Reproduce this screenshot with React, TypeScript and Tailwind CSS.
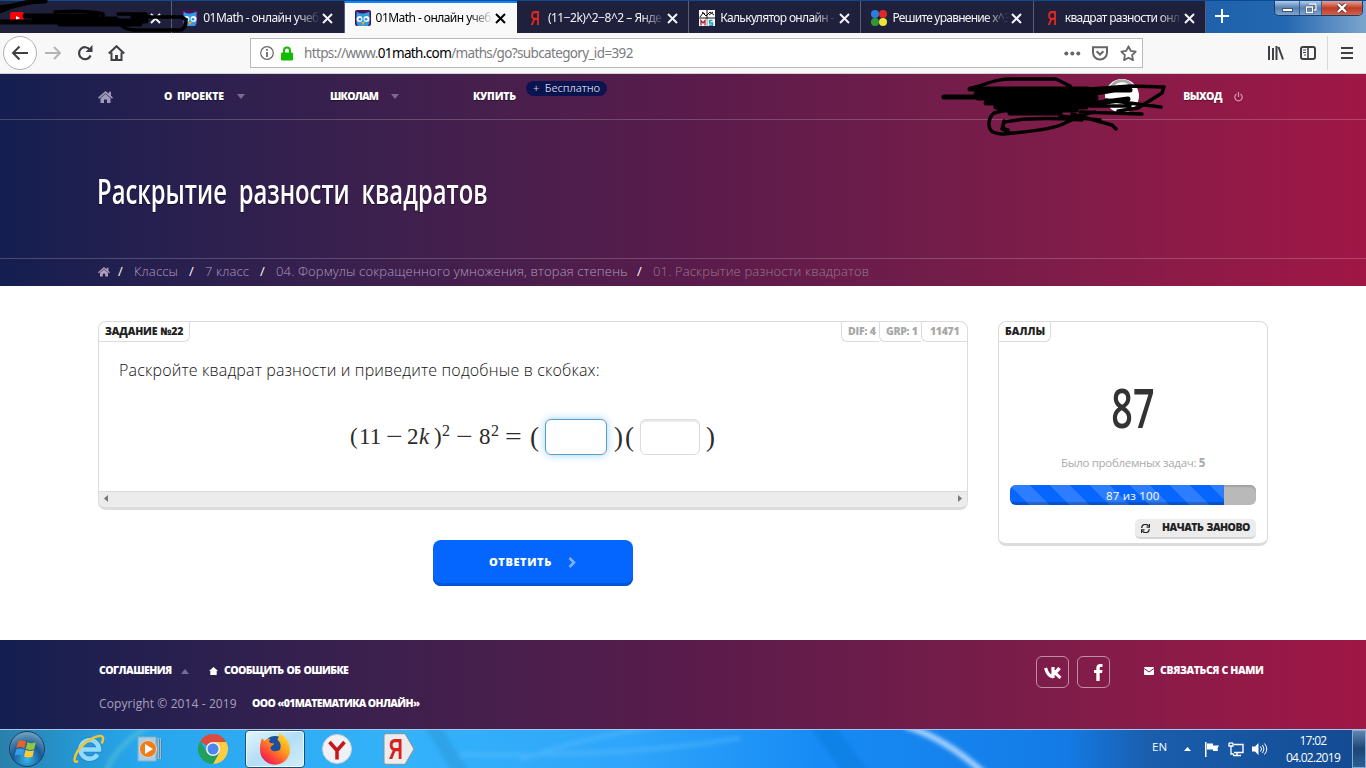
import { ReactNode } from 'react'
import clsx from 'clsx'

/* ---------- browser chrome ---------- */

function OwlIcon() {
  return (
    <svg width="16" height="16" viewBox="0 0 16 16">
      <rect width="16" height="16" rx="2" fill="#4a0f58" />
      <path d="M1.500 1.500Q4 4 8 3.500T14.500 1.500V13L13 16H3l-1.500-3z" fill="#2f9be0" />
      <circle cx="4.500" cy="9" r="3" fill="#eaf7ff" />
      <circle cx="11.500" cy="9" r="3" fill="#eaf7ff" />
      <circle cx="5" cy="9.200" r="1.300" fill="#3a8ac4" />
      <circle cx="11" cy="9.200" r="1.300" fill="#3a8ac4" />
      <path d="M6.200 12h3.600L8 15.600z" fill="#f5a623" />
    </svg>
  )
}

function YandexIcon() {
  return (
    <span className="w-4 text-center text-[20px] leading-4 text-[#e0281f] font-['Liberation_Sans',sans-serif]">
      <span className="inline-block scale-x-[0.65] font-bold">Я</span>
    </span>
  )
}

function CalcIcon() {
  return (
    <svg width="16" height="16" viewBox="0 0 16 16">
      <rect width="16" height="16" fill="#fff" />
      <path d="M8 0v9M0 8h16M1 7l3-4 3 3 4-4 4 3M3 2l3 2M10 5l4-3" stroke="#111" strokeWidth="1" fill="none" />
      <path d="M2 15.5V10.5l2 2.5 2-2.500V15.500" stroke="#b3202c" strokeWidth="1.3" fill="none" />
      <path d="M13.500 10.500H10.500V13h3v2.300H10" stroke="#16a3b8" strokeWidth="1.500" fill="none" />
      <path d="M8 9v7" stroke="#999" />
    </svg>
  )
}

function DotsIcon() {
  return (
    <svg width="16" height="16" viewBox="0 0 16 16">
      <circle cx="4" cy="4" r="4" fill="#2f7de0" />
      <circle cx="12" cy="4" r="4" fill="#e02626" />
      <circle cx="4" cy="12" r="4" fill="#2f9a33" />
      <circle cx="12" cy="12" r="4" fill="#ece43a" />
    </svg>
  )
}

function YoutubeIcon() {
  return (
    <svg width="16" height="16" viewBox="0 0 16 16">
      <rect x="0" y="2" width="14" height="11" rx="2.500" fill="#f00" />
      <path d="M6 6l4 2-4 2z" fill="#fff" />
    </svg>
  )
}

function CloseIcon() {
  return (
    <svg width="11" height="11" viewBox="0 0 11 11" className="shrink-0">
      <path d="M1 1l9 9M10 1l-9 9" stroke="currentColor" strokeWidth="2" />
    </svg>
  )
}

interface TabProps {
  icon: ReactNode
  title: string
  active?: boolean
  tracking?: string
}

function Tab({ icon, title, active, tracking = 'tracking-[-0.55px]' }: TabProps) {
  return (
    <div
      className={clsx(
        'flex h-full w-[172.3px] shrink-0 items-center pl-[10px]',
        active ? 'border-t-2 border-[#0a84ff] bg-[#f9f9fa] text-black' : 'border-r border-[#5b5d78] bg-[#1f203c] pt-[2px] text-[#f3f3f7]',
      )}
    >
      <span className="flex w-[21px] shrink-0">{icon}</span>
      <span
        className={clsx(
          'w-[117px] whitespace-nowrap text-xs [mask-image:linear-gradient(to_right,#000_80%,transparent)]',
          tracking,
        )}
      >
        {title}
      </span>
      <span className="ml-[2px] flex">
        <CloseIcon />
      </span>
    </div>
  )
}

function TabStrip() {
  return (
    <div className="flex h-[33px] border-t border-[#0d4a94] bg-linear-to-r from-[#1c63b0] via-[#2f72b8] to-[#6e9cc8]">
      <Tab icon={<YoutubeIcon />} title="" />
      <Tab icon={<OwlIcon />} title="01Math - онлайн учебн" />
      <Tab icon={<OwlIcon />} title="01Math - онлайн учебн" active />
      <Tab icon={<YandexIcon />} title="(11−2k)^2−8^2 – Янде" tracking="tracking-[-0.5px]" />
      <Tab icon={<CalcIcon />} title="Калькулятор онлайн -" tracking="tracking-[-0.65px]" />
      <Tab icon={<DotsIcon />} title="Решите уравнение x^3" tracking="tracking-[-0.75px]" />
      <Tab icon={<YandexIcon />} title="квадрат разности онл" tracking="tracking-[-0.65px]" />
      <div className="flex flex-1 justify-between bg-linear-to-r from-[#1f61ab] via-[#2468b2] to-[#7ba5cd]">
        <svg width="16" height="16" viewBox="0 0 16 16" className="ml-[8px] mt-[7px]">
          <path d="M8 1v14M1 8h14" stroke="#fff" strokeWidth="2" />
        </svg>
        <div className="mr-[3px] flex h-[15px] overflow-hidden rounded-b-[5px] border border-t-0 border-[#1c3c66]">
          <div className="flex w-[25px] items-center justify-center border-r border-[#355d8c] bg-linear-to-b from-[#b4cce6] via-[#5580b4] to-[#7fa6d2]">
            <span className="mt-[3px] h-[4px] w-[11px] border border-[#46566c] bg-white" />
          </div>
          <div className="flex w-[22px] items-center justify-center border-r border-[#355d8c] bg-linear-to-b from-[#b4cce6] via-[#5580b4] to-[#7fa6d2]">
            <svg width="12" height="11" viewBox="0 0 12 11">
              <path d="M4 1h7v6H9M1.500 4h6v5.500h-6z" fill="none" stroke="#46566c" strokeWidth="2.600" />
              <path d="M4 1h7v6H9M1.500 4h6v5.500h-6z" fill="none" stroke="#fff" strokeWidth="1.300" />
            </svg>
          </div>
          <div className="flex w-[40px] items-center justify-center bg-linear-to-b from-[#e0a294] via-[#bf3a24] to-[#d0614a]">
            <svg width="12" height="10" viewBox="0 0 12 10">
              <path d="M2 1l8 8M10 1L2 9" stroke="#5b3a3a" strokeWidth="4" />
              <path d="M2 1l8 8M10 1L2 9" stroke="#fff" strokeWidth="2.400" />
            </svg>
          </div>
        </div>
      </div>
    </div>
  )
}

function Toolbar() {
  return (
    <div className="flex h-[41px] items-center border-b border-[#d2d2d4] bg-[#f8f8f9] text-[#3f3f44]">
      <div className="ml-[3px] flex size-[34px] items-center justify-center rounded-full border border-[#b1b1b5] bg-white">
        <svg width="18" height="16" viewBox="0 0 18 16" fill="none" stroke="currentColor" strokeWidth="2">
          <path d="M17 8H2M8.500 1.500L2 8l6.500 6.500" />
        </svg>
      </div>
      <svg width="17" height="14" viewBox="0 0 17 14" fill="none" stroke="#b5b5b8" strokeWidth="2" className="ml-2">
        <path d="M0 7h15M9 1l6 6-6 6" />
      </svg>
      <svg width="16" height="16" viewBox="0 0 16 16" fill="none" stroke="currentColor" strokeWidth="2.200" className="ml-[15px]">
        <path d="M13 4.800A6 6 0 1 0 13.600 10.500" />
        <path d="M15.500 0v7h-7z" fill="currentColor" stroke="none" />
      </svg>
      <svg width="17" height="16" viewBox="0 0 17 16" fill="none" stroke="currentColor" strokeWidth="2" className="ml-[15px]">
        <path d="M.8 8.500L8.500 1.200l7.700 7.300M3.500 7.500V15h10V7.500" />
        <path d="M7 15v-5h3v5z" fill="currentColor" stroke="none" />
      </svg>
      <div className="ml-[125px] flex h-[30px] w-[893px] items-center border border-[#b9b9bb] bg-white">
        <svg width="14" height="14" viewBox="0 0 14 14" fill="none" stroke="#66666a" className="ml-[9px]">
          <circle cx="7" cy="7" r="6.300" strokeWidth="1.200" />
          <path d="M7 6v5M7 3v1.700" strokeWidth="1.700" />
        </svg>
        <svg width="12" height="15" viewBox="0 0 12 15" className="ml-[7px]">
          <path d="M3 7V4.500a3 3 0 0 1 6 0V7" fill="none" stroke="#12bc00" strokeWidth="2" />
          <rect y="6.500" width="12" height="8" rx="1.200" fill="#12bc00" />
        </svg>
        <span className="ml-[11px] whitespace-nowrap text-[13.5px] tracking-[-0.64px] text-[#7b7b80]">
          https://www.<span className="text-black">01math.com</span>/maths/go?subcategory_id=392
        </span>
        <svg width="17" height="5" viewBox="0 0 17 5" fill="#66666a" className="ml-auto">
          <circle cx="2.300" cy="2.500" r="2" />
          <circle cx="8.300" cy="2.500" r="2" />
          <circle cx="14.300" cy="2.500" r="2" />
        </svg>
        <svg width="16" height="15" viewBox="0 0 16 15" fill="none" stroke="#66666a" strokeWidth="2" className="ml-[11px]">
          <path d="M1 1.200h14V6.500a7 7 0 0 1-14 0z" />
          <path d="M4.600 5.200L8 8.500l3.400-3.300" />
        </svg>
        <svg width="17" height="17" viewBox="0 0 17 17" fill="none" stroke="#66666a" strokeWidth="1.800" strokeLinejoin="round" className="ml-3 mr-[5px]">
          <path d="M8.500 1.300l2.200 4.600 5 .7-3.600 3.500.9 5-4.500-2.400L4 15.100l.9-5L1.300 6.600l5-.7z" />
        </svg>
      </div>
      <svg width="16" height="14" viewBox="0 0 16 14" stroke="currentColor" strokeWidth="2" className="ml-auto">
        <path d="M1 0v14M5 2v12M8.500 0v14M10.500 1l4.500 12.500" />
      </svg>
      <svg width="16" height="14" viewBox="0 0 16 14" fill="none" stroke="currentColor" className="ml-[16px]">
        <rect x="1" y="1" width="14" height="12" rx="2" strokeWidth="2" />
        <path d="M8 1v12" strokeWidth="1.600" />
        <path d="M3 4h3M3 6.500h3M4 9h2" strokeWidth="1" />
      </svg>
      <div className="ml-[11px] h-[34px] border-l border-[#d7d7db]" />
      <svg width="12" height="12" viewBox="0 0 12 12" stroke="currentColor" strokeWidth="2" className="ml-[13px] mr-[13px]">
        <path d="M0 1h12M0 6h12M0 11h12" />
      </svg>
    </div>
  )
}

/* ---------- site ---------- */

function HomeIcon({ size = 15 }: { size?: number }) {
  return (
    <svg width={size} height={size * 0.8} viewBox="0 0 15 12" fill="currentColor">
      <path d="M7.500 0L10.800 2.800V.8h2.200v3.900l2 1.900-1 1.200-6.500-5.600L1 7.800 0 6.600z" />
      <path d="M7.500 2.800l5 4.400V12H9V8.500H6V12H2.500V7.200z" />
    </svg>
  )
}

function Caret({ up }: { up?: boolean }) {
  return (
    <svg width="8" height="5" viewBox="0 0 8 5" fill="#7b6a94" className={clsx('shrink-0', up && 'rotate-180')}>
      <path d="M0 0h8L4 5z" />
    </svg>
  )
}

function Scribble() {
  return (
    <svg
      width="230"
      height="66"
      viewBox="0 0 230 66"
      fill="none"
      stroke="#000"
      strokeLinecap="round"
      strokeLinejoin="round"
      className="absolute left-[940px] top-0"
    >
      <circle cx="182" cy="22" r="17" fill="#fff" stroke="none" />
      <path d="M172 12a12 12 0 0 1 20 0" stroke="#aaa" strokeWidth="3" />
      <path
        d="M4 23h34M30 15h118M36 20h120M38 24h118M46 29h112M56 33h90M60 36h76M70 39h50M120 16h70M150 20l24-4M150 30l38-5"
        strokeWidth="5"
      />
      <path d="M32 14c18-5 24-9 40-9h44l14 7M150 15l40-3 34 1-2 6-24 15-20 3M166 26l55 7M150 32l40 0" strokeWidth="3.500" />
      <path d="M66 36l-12 3c-6 5-7 15-1 19 6 3 12 2 20 1 22-2 40-4 50-9 10-5 22-11 32-12M64 48l-2 7 8 4M64 48c20-4 50-4 78-2M64 47c-2 6-1 8 4 9M120 42l40 4M132 40l40 11 4 4M140 38l62 2" strokeWidth="3.500" />
    </svg>
  )
}

const gradient = 'bg-linear-to-r from-[#141e50] via-[#591b4b] to-[#a01645]'

function SiteHeader() {
  return (
    <header className={clsx('relative h-[212px] text-white', gradient)}>
      <nav className="flex h-[46px] items-center border-b border-white/20 pl-[98px] text-[10.5px] font-extrabold tracking-[-0.1px] [text-shadow:0_1px_1px_#0006]">
        <span className="w-[66px] text-[#a09ab8]">
          <HomeIcon />
        </span>
        <span className="flex w-[166px] items-center gap-[13px] whitespace-nowrap">
          <span className="w-[60px] [word-spacing:2px]">О ПРОЕКТЕ</span>
          <Caret />
        </span>
        <span className="flex w-[143px] items-center gap-[13px]">
          <span className="w-[48px] tracking-[-0.8px]">ШКОЛАМ</span>
          <Caret />
        </span>
        <span className="w-[53px] tracking-[-0.2px]">КУПИТЬ</span>
        <span className="mb-4 flex h-[15px] w-[81px] items-center justify-center rounded-full bg-[#0c1450] text-[11px] font-normal text-[#c6cbe6] [word-spacing:3px]">
          + Бесплатно
        </span>
        <span className="ml-auto mr-[12px] tracking-[-0.5px]">ВЫХОД</span>
        <svg width="9" height="10" viewBox="0 0 9 10" fill="none" stroke="#d293b0" strokeWidth="1.200" className="mr-[123px]">
          <path d="M4.500 0v5M2.500 2a3.700 3.700 0 1 0 4 0" />
        </svg>
      </nav>
      <Scribble />
      <div className="flex h-[138px] items-center pl-[97px]">
        <h1 className="origin-left scale-x-[0.7] whitespace-nowrap pt-[4px] text-[34px] font-semibold leading-none [word-spacing:8px] [text-shadow:0_1px_1px_#0008]">
          Раскрытие разности квадратов
        </h1>
      </div>
      <div className="flex h-7 items-center whitespace-nowrap border-t border-white/20 pb-px pl-[98px] text-[13px] font-light tracking-[0.16px] text-[#b09cbc]">
        <HomeIcon size={12} />
        <Slash />
        <span className="w-[47px]">Классы</span>
        <Slash />
        <span className="w-[47px]">7 класс</span>
        <Slash />
        <span className="w-[353px]">04. Формулы сокращенного умножения, вторая степень</span>
        <Slash />
        <span className="text-[#9a7a8c]">01. Раскрытие разности квадратов</span>
      </div>
    </header>
  )
}

function Slash() {
  return <span className="w-[24px] pl-[8px] font-normal text-white">/</span>
}

function AnswerBox({ focused }: { focused?: boolean }) {
  return (
    <span
      className={clsx(
        'h-9 shrink-0 rounded-md border bg-white',
        focused ? 'w-[62px] border-[#5b9dc9] shadow-[0_0_8px_#9fd2fb]' : 'w-[60px] border-[#dcdcdc] shadow-[inset_0_2px_0_#ebebeb]',
      )}
    />
  )
}

function Paren({ children }: { children: string }) {
  return <span className="text-[27px] leading-[34px]">{children}</span>
}

function Operator({ children }: { children: string }) {
  return <span className="inline-block origin-left scale-x-[1.3]">{children}</span>
}

function Formula() {
  return (
    <div className="ml-[251px] mt-[37px] flex h-9 items-center whitespace-nowrap text-[23px] text-[#2b2b2b] font-['Liberation_Serif',serif]">
      <span className="w-[9px]">(</span>
      <span className="w-[27px]">11</span>
      <span className="w-[21px]">
        <Operator>−</Operator>
      </span>
      <span className="w-[12px]">2</span>
      <span className="w-[15px] italic">k</span>
      <span className="w-[8px]">)</span>
      <span className="mb-[13px] w-[14px] text-base">2</span>
      <span className="w-[23px]">
        <Operator>−</Operator>
      </span>
      <span className="w-[12px]">8</span>
      <span className="mb-[13px] w-[14px] text-base">2</span>
      <span className="w-[25px]">
        <Operator>=</Operator>
      </span>
      <span className="flex w-[15px]">
        <Paren>(</Paren>
      </span>
      <AnswerBox focused />
      <span className="flex w-[33px] gap-[2px] pl-[7px]">
        <Paren>)</Paren>
        <Paren>(</Paren>
      </span>
      <AnswerBox />
      <span className="flex pl-[6px]">
        <Paren>)</Paren>
      </span>
    </div>
  )
}

function TaskCard() {
  return (
    <section className="flex h-[189px] w-[870px] flex-col overflow-hidden rounded-lg border border-b-[3px] border-[#dcdcdc]">
      <div className="flex h-5 justify-between text-[10.5px] font-extrabold leading-[19px]">
        <span className="w-[91px] whitespace-nowrap rounded-br-md border-b border-r border-[#dcdcdc] pl-[6px] tracking-[-0.15px] text-[#222]">
          ЗАДАНИЕ №22
        </span>
        <span className="flex whitespace-nowrap text-[#a8a8a8]">
          <span className="w-[38px] rounded-bl-md border-b border-l border-[#dcdcdc] pl-[6px] tracking-[-0.2px]">DIF: 4</span>
          <span className="w-[42px] rounded-bl-md border-b border-l border-[#dcdcdc] pl-[6px] tracking-[-0.3px]">GRP: 1</span>
          <span className="w-[46px] rounded-bl-md border-b border-l border-[#dcdcdc] pl-[8px] tracking-[-0.3px]">11471</span>
        </span>
      </div>
      <p className="mt-[16px] whitespace-nowrap pl-5 text-base font-light leading-6 tracking-[0.17px] text-[#111]">
        Раскройте квадрат разности и приведите подобные в скобках:
      </p>
      <Formula />
      <div className="mt-auto flex h-4 items-center justify-between border-t border-[#dcdcdc] bg-[#ececec] px-[5px]">
        <svg width="4" height="7" viewBox="0 0 4 7" fill="#777" className="mb-[2px]">
          <path d="M4 0v7L0 3.500z" />
        </svg>
        <svg width="4" height="7" viewBox="0 0 4 7" fill="#777" className="mb-[2px]">
          <path d="M0 0v7l4-3.500z" />
        </svg>
      </div>
    </section>
  )
}

function ScoreCard() {
  return (
    <aside className="flex h-[225px] w-[270px] flex-col rounded-lg border border-b-[3px] border-[#dcdcdc]">
      <span className="h-5 w-[52px] rounded-br-md border-b border-r border-[#dcdcdc] pl-[6px] text-[10.5px] font-extrabold leading-[19px] text-[#222]">
        БАЛЛЫ
      </span>
      <div className="mt-[37px] flex h-[56px] items-center justify-center text-[54px] font-semibold leading-none text-[#333]">
        <span className="scale-x-[0.7]">87</span>
      </div>
      <p className="mt-[18px] whitespace-nowrap text-center text-[11.5px] leading-5 tracking-[-0.3px] text-[#aaa]">
        Было проблемных задач: <b>5</b>
      </p>
      <div className="mx-[11px] mt-[12px] h-5 overflow-hidden rounded-md bg-[#b9b9b9] shadow-[inset_0_2px_1px_#a3a3a3]">
        <div className="relative h-full w-[87%] bg-[#0766ff] bg-[linear-gradient(45deg,#ffffff26_25%,transparent_25%,transparent_50%,#ffffff26_50%,#ffffff26_75%,transparent_75%)] bg-[length:40px_40px] shadow-[inset_0_-3px_1px_#0003]">
          <span className="absolute left-[96px] top-0 whitespace-nowrap text-[11.5px] leading-[22px] tracking-[0.2px] text-white">87 из 100</span>
        </div>
      </div>
      <button className="ml-auto mr-[11px] mt-[14px] flex h-5 w-[121px] items-center whitespace-nowrap rounded-[5px] border-b-2 border-[#d4d4d4] bg-[#ececec] pl-[6px] text-[10.5px] font-extrabold tracking-[-0.5px] text-[#222] [word-spacing:1px]">
        <svg width="9" height="9" viewBox="0 0 9 9" fill="none" stroke="currentColor" strokeWidth="1.200" className="mr-[12px]">
          <path d="M.7 4A3.700 3.700 0 0 1 7.500 2M8.500 0v3.200H5.500M8.300 5A3.700 3.700 0 0 1 1.500 7M.5 9V5.800h3" />
        </svg>
        НАЧАТЬ ЗАНОВО
      </button>
    </aside>
  )
}

function SocialButton({ children }: { children: ReactNode }) {
  return <span className="flex h-8 w-[33px] items-center justify-center rounded-md border border-white/50">{children}</span>
}

function SiteFooter() {
  return (
    <footer className={clsx('flex h-[89px] justify-between pl-[99px] pr-[102px] text-white', gradient)}>
      <div className="whitespace-nowrap pt-[21px] text-[10.5px] font-extrabold">
        <div className="flex h-5 items-center">
          <span className="w-[82px] tracking-[-0.55px]">СОГЛАШЕНИЯ</span>
          <Caret up />
          <svg width="9" height="8" viewBox="0 0 9 8" fill="#fff" className="ml-[20px] mr-[6px]">
            <path d="M4.500 0L9 4H7.700v4H1.300V4H0z" />
          </svg>
          <span className="tracking-[-0.64px] [word-spacing:1px]">СООБЩИТЬ ОБ ОШИБКЕ</span>
        </div>
        <div className="mt-[13px] flex h-5 items-center">
          <span className="w-[153px] text-xs font-normal tracking-[0.1px] text-[#aaa0bc]">Copyright © 2014 - 2019</span>
          <span className="tracking-[-0.65px]">ООО «01МАТЕМАТИКА ОНЛАЙН»</span>
        </div>
      </div>
      <div className="flex items-start pt-[16px] text-[10.5px] font-extrabold">
        <SocialButton>
          <svg width="18" height="12" viewBox="0 0 18 12" fill="none" stroke="#fff" strokeWidth="3.200" className="mt-[2px]">
            <path d="M1.500 1C3 6 5 9.500 9 9.800M9 0v11M9 6c3-.5 4.500-2 6.500-5M10 6c2.500.5 4 2.500 6.500 5" />
          </svg>
        </SocialButton>
        <span className="w-2" />
        <SocialButton>
          <svg width="9" height="17" viewBox="0 0 9 17" fill="#fff" className="ml-[9px]">
            <path d="M2.300 17V9H0V6h2.300V4C2.300 1.500 4 0 6 0h2.500v3H7C6 3 5.700 3.500 5.700 4.200V6h2.800l-.4 3H5.700v8z" />
          </svg>
        </SocialButton>
        <span className="ml-[34px] flex h-[30px] w-[120px] items-center whitespace-nowrap tracking-[-0.38px]">
          <svg width="10" height="8" viewBox="0 0 10 8" className="mr-[6px] shrink-0">
            <rect width="10" height="8" rx="1" fill="#fff" />
            <path d="M0 1.500l5 3.500 5-3.500" stroke="#8a1848" fill="none" />
          </svg>
          СВЯЗАТЬСЯ С НАМИ
        </span>
      </div>
    </footer>
  )
}

/* ---------- desktop taskbar ---------- */

function StartOrb() {
  return (
    <svg width="38" height="38" viewBox="0 0 38 38">
      <defs>
        <radialGradient id="orb" cx="50%" cy="80%" r="75%">
          <stop offset="0" stopColor="#33b8ee" />
          <stop offset=".55" stopColor="#1a5a94" />
          <stop offset="1" stopColor="#6c9dbd" />
        </radialGradient>
      </defs>
      <circle cx="19" cy="19" r="17.500" fill="url(#orb)" stroke="#183f66" />
      <path d="M10 11.500c3-1.500 5-1.300 8 .2l-1.500 6.500c-3-1.500-5-1.500-8-.2z" fill="#e9622c" />
      <path d="M19.300 12.300c3 1.300 5.500 1.300 8.500 0L26.300 19c-3 1.200-5.500 1.200-8.500-.2z" fill="#93c83e" />
      <path d="M8.200 19.300c3-1.200 5-1.200 8 .2l-1.500 6.300c-3-1.500-5-1.500-8-.2z" fill="#3a9be6" />
      <path d="M17.500 20c3 1.400 5.500 1.400 8.500.2l-1.500 6.500c-3 1.200-5.500 1-8.500-.3z" fill="#fccb35" />
    </svg>
  )
}

function ExplorerIcon() {
  return (
    <svg width="32" height="32" viewBox="0 0 32 32" fill="none">
      <path d="M24.500 21.500A9.300 9.300 0 1 1 26 16.500H9" stroke="#2b86cf" strokeWidth="6.500" />
      <path d="M24.500 21.500A9.300 9.300 0 1 1 26 16.500H9" stroke="#8fdcfb" strokeWidth="4.500" />
      <path d="M5 28C-1 32 1 20 10 12 20 3 31 0 30 6c0 1-.5 3-1.500 4.500" stroke="#f2c430" strokeWidth="2.500" />
    </svg>
  )
}

function PlayerIcon() {
  return (
    <svg width="28" height="26" viewBox="0 0 28 26">
      <path d="M9 2h15v21H9z" fill="#8fc3e2" />
      <path d="M20 2v21M22.500 2.500v20M24.500 3v20" stroke="#4d87ab" />
      <rect x="1" y="1" width="18" height="24" fill="#a9cde2" stroke="#7fb0cc" />
      <circle cx="11" cy="13" r="8.500" fill="#ef7d1a" stroke="#d9d9d9" />
      <path d="M8 8l8 5-8 5z" fill="#fff" />
    </svg>
  )
}

function ChromeIcon() {
  return (
    <svg width="30" height="30" viewBox="0 0 30 30">
      <path d="M15 15L2 7.500A15 15 0 0 1 28 7.500z" fill="#dd4b3e" />
      <path d="M15 8h13.300A15 15 0 0 1 15 30l6-11z" fill="#fdce42" />
      <path d="M2 7.500A15 15 0 0 0 15 30l6-11-12-1z" fill="#1fa15d" />
      <circle cx="15" cy="15" r="7" fill="#f3f3f3" />
      <circle cx="15" cy="15" r="5.500" fill="#4a86ee" />
    </svg>
  )
}

function FirefoxIcon() {
  return (
    <svg width="32" height="32" viewBox="0 0 32 32">
      <defs>
        <linearGradient id="fox" x1="1" y1="0" x2=".2" y2="1">
          <stop offset="0" stopColor="#fff03a" />
          <stop offset=".45" stopColor="#ff9a1a" />
          <stop offset=".8" stopColor="#ff3a40" />
          <stop offset="1" stopColor="#e3155f" />
        </linearGradient>
      </defs>
      <circle cx="16" cy="14.500" r="11.500" fill="#1c4fa0" />
      <path
        d="M3 5l2.500 3C7 6 9 5.500 11 6c-1 2-1 3 0 4l4 .5c0 2-3 2-3.500 4 0 3 3 4.500 5.500 3.500 3 0 4.500-1 4.500-4 1-5-3.500-7-3-8C20 5 20 2 20 0c6 3 11 9 11 16.500A15 15 0 0 1 1 17C1 12 1.500 9 3 5z"
        fill="url(#fox)"
      />
    </svg>
  )
}

function YBrowserIcon() {
  return (
    <svg width="30" height="30" viewBox="0 0 30 30">
      <circle cx="15" cy="15" r="14.500" fill="#f1f1f3" stroke="#c4d0da" />
      <path d="M7.500 8l7.500 8.500L22.500 8M15 15v10.500" fill="none" stroke="#c8141c" strokeWidth="3.500" />
    </svg>
  )
}

function Taskbar() {
  return (
    <div className="relative flex h-[39px] overflow-hidden border-t border-[#a9c4e4] bg-[#1e97f5]">
      <svg width="1366" height="38" viewBox="0 0 1366 38" className="absolute inset-0">
        <defs>
          <linearGradient id="bar">
            <stop offset="0" stopColor="#2b7fab" />
            <stop offset=".045" stopColor="#2593cb" />
            <stop offset=".1" stopColor="#27a6ed" />
            <stop offset=".3" stopColor="#34b2fa" />
            <stop offset=".46" stopColor="#2fa5fb" />
            <stop offset=".6" stopColor="#178bf5" />
            <stop offset=".78" stopColor="#147be6" />
            <stop offset=".84" stopColor="#1a5ead" />
            <stop offset="1" stopColor="#134a92" />
          </linearGradient>
          <filter id="soft" filterUnits="userSpaceOnUse" x="0" y="-20" width="1366" height="80">
            <feGaussianBlur stdDeviation="2" />
          </filter>
        </defs>
        <rect width="1366" height="38" fill="url(#bar)" />
        <g fill="none" filter="url(#soft)">
          <path d="M905-4Q945 8 985 44" stroke="#a9d4ff" strokeWidth="6" />
          <path d="M520 30Q580 8 660-4M460 24Q620 28 740 8" stroke="#63c2ff" strokeOpacity=".4" strokeWidth="4" />
          <path d="M105 44Q115 15 150-4" stroke="#6fd0d0" strokeOpacity=".5" strokeWidth="4" />
          <path d="M430-8l34 56" stroke="#218fce" strokeOpacity=".4" strokeWidth="14" />
          <path d="M820-8l40 56" stroke="#0a72d0" strokeOpacity=".35" strokeWidth="22" />
        </g>
      </svg>
      <div className="relative flex w-full items-center">
        <span className="ml-[8px] w-[65px]">
          <StartOrb />
        </span>
        <span className="w-[64px]">
          <ExplorerIcon />
        </span>
        <span className="w-[61px]">
          <PlayerIcon />
        </span>
        <span className="w-[47px]">
          <ChromeIcon />
        </span>
        <span className="flex h-[38px] w-[60px] items-center justify-center rounded-sm border border-[#1c4f7c] bg-linear-to-br from-[#e3f4fc] via-[#b3def5] to-[#d3eefa] shadow-[inset_0_0_0_1px_#ffffffc0]">
          <FirefoxIcon />
        </span>
        <span className="ml-[17px] w-[61px]">
          <YBrowserIcon />
        </span>
        <span className="relative">
          <svg width="32" height="32" viewBox="0 0 32 32">
            <path d="M3 .7h19L31 16l-9 15.300H3a2 2 0 0 1-2-2V2.700a2 2 0 0 1 2-2z" fill="#ececec" stroke="#8b8f94" />
          </svg>
          <span className="absolute left-[2px] top-0 scale-x-[0.65] text-[30px] font-bold leading-8 text-[#d8201f] font-['Liberation_Sans',sans-serif]">
            Я
          </span>
        </span>
        <div className="ml-auto flex h-full items-center text-xs text-white">
          <span className="mb-[5px] w-[32px] text-[11.5px]">EN</span>
          <svg width="7" height="4" viewBox="0 0 7 4" fill="#fff">
            <path d="M0 4h7L3.500 0z" />
          </svg>
          <svg width="16" height="15" viewBox="0 0 16 15" className="ml-[13px]" fill="#fff">
            <path d="M1 0h1.500v15H1zM3 1.500h6v2h6l-1.500 3L14 9H9V7.500H3z" />
          </svg>
          <svg width="16" height="15" viewBox="0 0 16 15" className="ml-[8px]" fill="none" stroke="#fff">
            <path d="M6 2.500h9v8H6M9 11v2M5 13.500h8" strokeWidth="1.400" />
            <path d="M1 1v3h4V1M3 4v8h3M2 0v2M4 0v2" strokeWidth="1.300" />
          </svg>
          <svg width="16" height="14" viewBox="0 0 16 14" className="ml-[8px]" fill="none" stroke="#fff">
            <path d="M0 4.500h3L6.500 1v12L3 9.500H0z" fill="#fff" stroke="none" />
            <path d="M8.500 4.500q2 2.500 0 5M10.500 3q3 4 0 8M12.500 1.500q4.500 5.500 0 11" />
          </svg>
          <div className="ml-[17px] w-[56px] whitespace-nowrap text-center text-xs leading-[17px] tracking-[-0.7px]">
            <div>17:02</div>
            <div>04.02.2019</div>
          </div>
          <div className="ml-[11px] h-[38px] w-[14px] border border-[#86a9cf] bg-linear-to-b from-[#5e86b0] via-[#1c4678] to-[#2a6096]" />
        </div>
      </div>
    </div>
  )
}

function TabScribble() {
  return (
    <svg
      width="200"
      height="34"
      viewBox="0 0 200 34"
      fill="none"
      stroke="#000"
      strokeLinecap="round"
      strokeLinejoin="round"
      className="absolute left-0 top-0"
    >
      <path d="M0 11Q22 1 45 1M0 22h60M25 16h72M34 19h82M60 24h80M66 21h80" strokeWidth="5" />
      <path d="M0 7l24-3M55 12q30-2 48 2v8M118 14h28v7M120 20q0 9 14 10h46q6-1 6-10l-4-3h-50" strokeWidth="3.500" />
    </svg>
  )
}

export default function App() {
  return (
    <div className="relative flex h-[768px] w-[1366px] flex-col overflow-hidden bg-white font-['Open_Sans','Noto_Sans',sans-serif]">
      <div className="font-['Noto_Sans','Open_Sans',sans-serif]">
        <TabStrip />
        <Toolbar />
      </div>
      <TabScribble />
      <SiteHeader />
      <main className="flex flex-1 items-start gap-[30px] pl-[98px] pt-[35px]">
        <div className="flex flex-col items-center">
          <TaskCard />
          <button className="mt-[30px] flex h-[46px] w-[200px] items-center rounded-lg bg-[#0566ff] pb-[2px] pl-[56px] text-[11px] font-extrabold tracking-[0.6px] text-white shadow-[inset_0_-3px_1px_#0055d6]">
            <span className="w-[79px] text-left">ОТВЕТИТЬ</span>
            <svg width="8" height="11" viewBox="0 0 8 11" fill="none" stroke="#7db2ff" strokeWidth="2.500">
              <path d="M1.500 1l4.500 4.500L1.500 10" />
            </svg>
          </button>
        </div>
        <ScoreCard />
      </main>
      <SiteFooter />
      <Taskbar />
    </div>
  )
}
